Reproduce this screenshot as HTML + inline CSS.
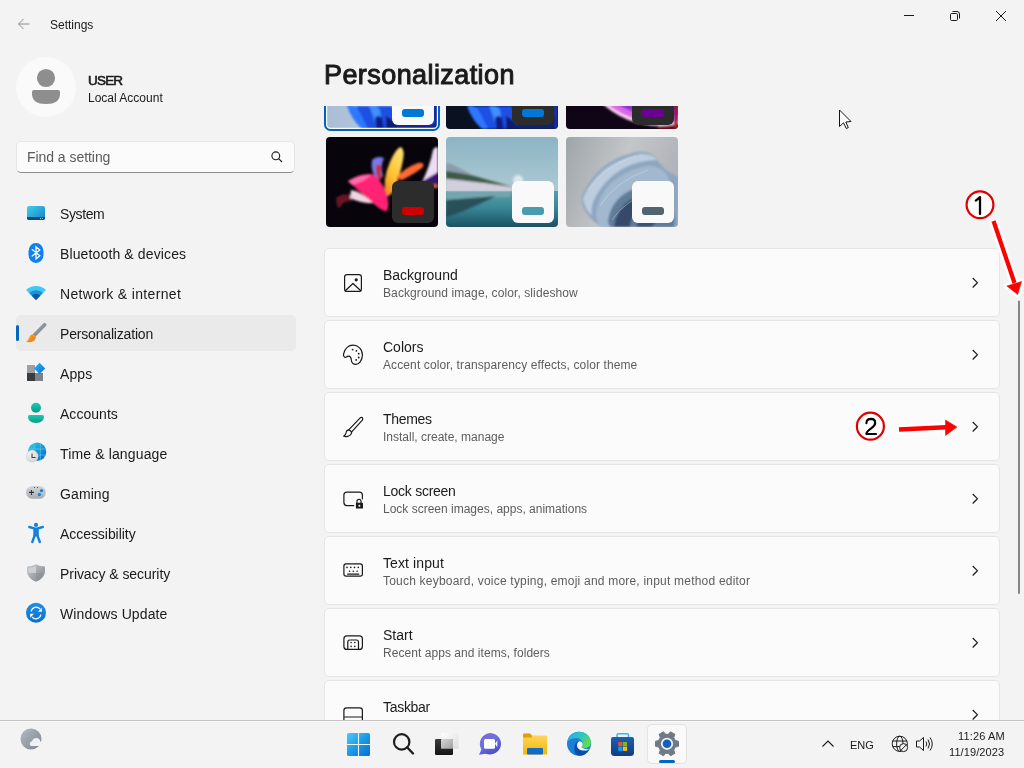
<!DOCTYPE html>
<html><head><meta charset="utf-8"><style>
html,body{margin:0;padding:0;width:1024px;height:768px;overflow:hidden;background:#f3f3f3;font-family:"Liberation Sans",sans-serif;}
.t{position:absolute;white-space:nowrap;will-change:transform;}
.card{position:absolute;left:324px;width:674px;height:67px;background:#fbfbfb;border:1px solid #e5e5e5;border-radius:5px;}
#content{position:absolute;left:0;top:106px;width:1024px;height:614px;overflow:hidden;}
#content .inner{position:absolute;left:0;top:-106px;width:1024px;height:900px;}
.sel{position:absolute;left:16px;top:315px;width:280px;height:36px;background:#eaeaea;border-radius:5px;}
.search{position:absolute;left:16px;top:141px;width:277px;height:30px;background:#fbfbfb;border:1px solid #e5e5e5;border-bottom:1px solid #8a8a8a;border-radius:5px;}
.taskbar{position:absolute;left:0;top:720px;width:1024px;height:48px;background:#f3f3f3;border-top:1px solid #c4c4c4;box-shadow:inset 0 1px 0 #f8f8f8;box-sizing:border-box;}
</style></head><body>
<div class="sel"></div>
<div style="position:absolute;left:16px;top:325px;width:3px;height:16px;background:#0067c0;border-radius:2px;"></div>
<div class="search"></div>
<div style="position:absolute;left:16px;top:57px;width:60px;height:60px;border-radius:50%;background:#fafafa;"></div>
<div class="t" style="left:50px;top:18.84px;font-size:12px;line-height:12px;color:#1a1a1a;font-weight:400;">Settings</div>
<div class="t" style="left:88px;top:73.57px;font-size:13.5px;line-height:13.5px;color:#1a1a1a;font-weight:400;letter-spacing:-0.8px;-webkit-text-stroke:0.6px #1a1a1a;">USER</div>
<div class="t" style="left:88px;top:92.34px;font-size:12px;line-height:12px;color:#1a1a1a;font-weight:400;">Local Account</div>
<div class="t" style="left:26.6px;top:149.75px;font-size:14px;line-height:14px;color:#5b5b5b;font-weight:400;letter-spacing:-0.05px;">Find a setting</div>
<div class="t" style="left:60px;top:207.35px;font-size:14px;line-height:14px;color:#1a1a1a;font-weight:400;letter-spacing:-0.38px;">System</div>
<div class="t" style="left:60px;top:247.35px;font-size:14px;line-height:14px;color:#1a1a1a;font-weight:400;letter-spacing:0.13px;">Bluetooth &amp; devices</div>
<div class="t" style="left:60px;top:287.35px;font-size:14px;line-height:14px;color:#1a1a1a;font-weight:400;letter-spacing:0.33px;">Network &amp; internet</div>
<div class="t" style="left:60px;top:327.35px;font-size:14px;line-height:14px;color:#1a1a1a;font-weight:400;letter-spacing:-0.18px;">Personalization</div>
<div class="t" style="left:60px;top:367.35px;font-size:14px;line-height:14px;color:#1a1a1a;font-weight:400;letter-spacing:0.08px;">Apps</div>
<div class="t" style="left:60px;top:407.35px;font-size:14px;line-height:14px;color:#1a1a1a;font-weight:400;letter-spacing:0.03px;">Accounts</div>
<div class="t" style="left:60px;top:447.35px;font-size:14px;line-height:14px;color:#1a1a1a;font-weight:400;letter-spacing:0.14px;">Time &amp; language</div>
<div class="t" style="left:60px;top:487.35px;font-size:14px;line-height:14px;color:#1a1a1a;font-weight:400;letter-spacing:0.1px;">Gaming</div>
<div class="t" style="left:60px;top:527.35px;font-size:14px;line-height:14px;color:#1a1a1a;font-weight:400;letter-spacing:-0.05px;">Accessibility</div>
<div class="t" style="left:60px;top:567.35px;font-size:14px;line-height:14px;color:#1a1a1a;font-weight:400;letter-spacing:-0.06px;">Privacy &amp; security</div>
<div class="t" style="left:60px;top:607.35px;font-size:14px;line-height:14px;color:#1a1a1a;font-weight:400;letter-spacing:0.12px;">Windows Update</div>
<div class="t" style="left:324px;top:62.34px;font-size:27px;line-height:27px;color:#1a1a1a;font-weight:400;letter-spacing:0.42px;-webkit-text-stroke:1.0px #1a1a1a;">Personalization</div>

<div id="content"><div class="inner">
<svg style="position:absolute;left:0;top:0" width="1024" height="240" viewBox="0 0 1024 240">
<defs>
<clipPath id="c1"><rect x="327.2" y="39" width="109.6" height="88.8" rx="3.5"/></clipPath>
<clipPath id="c2"><rect x="446" y="39" width="112" height="90" rx="4"/></clipPath>
<clipPath id="c3"><rect x="566" y="39" width="112" height="90" rx="4"/></clipPath>
<clipPath id="c4"><rect x="326" y="137" width="112" height="90" rx="4"/></clipPath>
<clipPath id="c5"><rect x="446" y="137" width="112" height="90" rx="4"/></clipPath>
<clipPath id="c6"><rect x="566" y="137" width="112" height="90" rx="4"/></clipPath>
<filter id="bl" x="-20%" y="-20%" width="140%" height="140%"><feGaussianBlur stdDeviation="0.8"/></filter>
<filter id="bl2" x="-20%" y="-20%" width="140%" height="140%"><feGaussianBlur stdDeviation="2"/></filter>
<linearGradient id="t1bg" x1="0" y1="0" x2="1" y2="0"><stop offset="0" stop-color="#a9bdd6"/><stop offset="1" stop-color="#c8d4e2"/></linearGradient>
<linearGradient id="bloomL" x1="0" y1="0" x2="1" y2="1"><stop offset="0" stop-color="#3a8cff"/><stop offset="0.6" stop-color="#0f4fe0"/><stop offset="1" stop-color="#0a2a90"/></linearGradient>
<radialGradient id="t3glow" cx="0.62" cy="-0.55" r="0.95"><stop offset="0" stop-color="#c030d0"/><stop offset="0.82" stop-color="#7a1cc8"/><stop offset="0.9" stop-color="#ffd8f0"/><stop offset="0.93" stop-color="#ff60a0"/><stop offset="1" stop-color="#200418" stop-opacity="0"/></radialGradient>
<linearGradient id="gYel" x1="0.7" y1="0" x2="0.2" y2="1"><stop offset="0" stop-color="#ffe070"/><stop offset="0.6" stop-color="#ffc030"/><stop offset="1" stop-color="#f08a20"/></linearGradient>
<linearGradient id="skyG" x1="0" y1="0" x2="0" y2="1"><stop offset="0" stop-color="#8db4c4"/><stop offset="1" stop-color="#c2d8de"/></linearGradient>
<linearGradient id="waterG" x1="0" y1="0" x2="0" y2="1"><stop offset="0" stop-color="#5a9ca6"/><stop offset="0.45" stop-color="#3a8896"/><stop offset="1" stop-color="#1a5264"/></linearGradient>
<linearGradient id="flowBg" x1="0" y1="0" x2="1" y2="0.3"><stop offset="0" stop-color="#9ea5a9"/><stop offset="0.55" stop-color="#c4c6c9"/><stop offset="1" stop-color="#b0b3b9"/></linearGradient>
<linearGradient id="flowF" x1="0" y1="0" x2="0" y2="1"><stop offset="0" stop-color="#9fb6cc"/><stop offset="1" stop-color="#5b7590"/></linearGradient>
</defs>

<!-- row1 tile1 selected -->
<rect x="325" y="37" width="114" height="93" rx="5.5" fill="#fbfbfb" stroke="#0063c4" stroke-width="2"/>
<g clip-path="url(#c1)">
<rect x="326" y="39" width="112" height="90" fill="url(#t1bg)"/>
<g filter="url(#bl)">
<path d="M347,106 Q352,104 358,108 Q366,118 372,129 L362,129 Q352,120 347,106 Z" fill="#2f78ff"/>
<path d="M356,106 L392,106 Q396,116 400,129 L368,129 Q362,116 356,106 Z" fill="#1b4fe2"/>
<path d="M369,106 Q376,104 380,110 L383,129 L376,129 Q374,116 369,106 Z" fill="#3f8fff"/>
<path d="M375,118 Q378,114 382,118 L384,129 L376,129 Z" fill="#0b1f8a"/>
<path d="M386,116 Q394,120 400,129 L386,129 Z" fill="#0a1a70"/>
<path d="M400,120 Q420,126 438,122 L438,129 L396,129 Z" fill="#12288a"/>
<path d="M430,104 L438,104 L438,129 L434,129 Z" fill="#0c2aa0"/>
</g>
<rect x="392" y="83" width="42" height="42" rx="6" fill="#f9f9f9"/>
<rect x="402" y="109" width="22" height="8" rx="3" fill="#0078d4"/>
</g>

<!-- row1 tile2 -->
<g clip-path="url(#c2)">
<rect x="446" y="39" width="112" height="90" fill="#0a1222"/>
<g filter="url(#bl)">
<path d="M467,106 Q472,104 478,108 Q486,118 492,129 L482,129 Q472,120 467,106 Z" fill="#2f78ff"/>
<path d="M476,106 L512,106 Q516,116 520,129 L488,129 Q482,116 476,106 Z" fill="#1b4fe2"/>
<path d="M489,106 Q496,104 500,110 L503,129 L496,129 Q494,116 489,106 Z" fill="#3f8fff"/>
<path d="M495,118 Q498,114 502,118 L504,129 L496,129 Z" fill="#0b1f8a"/>
<path d="M506,116 Q514,120 520,129 L506,129 Z" fill="#0a1a70"/>
<path d="M520,120 Q540,126 558,122 L558,129 L516,129 Z" fill="#102070"/>
<path d="M552,104 L558,104 L558,129 L555,129 Z" fill="#1530a0"/>
</g>
<rect x="512" y="83" width="42" height="42" rx="6" fill="#2c2c2c"/>
<rect x="522" y="109" width="22" height="8" rx="3" fill="#0078d4"/>
</g>

<!-- row1 tile3 -->
<g clip-path="url(#c3)">
<rect x="566" y="39" width="112" height="90" fill="#100516"/>
<g filter="url(#bl)">
<ellipse cx="672" cy="129" rx="14" ry="10" fill="#6a1020" opacity="0.9"/>
<circle cx="660" cy="40" r="86" fill="#ffd0ec"/>
<circle cx="661" cy="38" r="85" fill="#d868e8"/>
<circle cx="662" cy="34" r="83" fill="#8a30d8"/>
<circle cx="664" cy="28" r="82" fill="#5a18a0"/>
<rect x="674" y="104" width="4" height="25" fill="#a01828"/>
</g>
<rect x="632" y="83" width="42" height="42" rx="6" fill="#2c2c2c"/>
<rect x="642" y="109" width="22" height="8" rx="3" fill="#6a0094"/>
</g>

<!-- row2 tile1 glow -->
<g clip-path="url(#c4)">
<rect x="326" y="137" width="112" height="90" fill="#08040c"/>
<g filter="url(#bl)">
<path d="M336,198 Q341,193 350,195 L352,201 Q344,200 340,207 Q338,210 337,205 Z" fill="#6a1422"/>
<path d="M372,160 Q377,155 384,158 Q380,166 383,176 L378,181 Q370,172 372,160 Z" fill="#7a78e8"/>
<path d="M376,166 Q379,163 382,166 Q380,172 382,178 L379,180 Q375,173 376,166 Z" fill="#c03040"/>
<path d="M386,196 Q382,180 390,162 Q396,148 401,147 Q405,150 403,160 Q400,176 394,190 Q390,197 386,196 Z" fill="url(#gYel)"/>
<path d="M396,178 Q404,168 418,163 Q425,162 423,167 Q416,173 402,180 Z" fill="#ff6a30"/>
<path d="M348,181 Q360,173 372,174 Q380,178 386,192 Q390,204 387,211 Q383,212 374,204 Q360,192 348,181 Z" fill="#ff2474"/>
<path d="M348,181 Q360,174 371,175 Q364,182 352,185 Z" fill="#ff6ab0"/>
<path d="M351,190 Q362,192 373,203 Q362,204 350,198 Z" fill="#f4d4e4"/>
<path d="M422,182 Q430,166 433,150 Q436,145 438,148 L438,178 Q430,180 422,182 Z" fill="#eedcf4"/>
<path d="M414,186 Q428,178 438,172 L438,186 Z" fill="#3a1670"/>
<path d="M428,185 L438,184 L438,188 L428,188 Z" fill="#c06040"/>
</g>
<rect x="392" y="181" width="42" height="42" rx="6" fill="#2c2c2c"/>
<rect x="402" y="207" width="22" height="8" rx="3" fill="#d10000"/>
</g>

<!-- row2 tile2 lake -->
<g clip-path="url(#c5)">
<rect x="446" y="137" width="112" height="90" fill="url(#skyG)"/>
<rect x="446" y="191" width="112" height="36" fill="url(#waterG)"/>
<g filter="url(#bl)">
<circle cx="518" cy="180" r="5" fill="#ffffff" opacity="0.6"/>
<path d="M446,163.5 Q450,163 453,164.8 Q462,169 472,175 Q490,181 512,187 L446,180 Z" fill="#8c9cab"/>
<path d="M446,171 Q470,174 488,180 Q500,183 512,187 L500,187 Q475,181 446,178.5 Z" fill="#3d5a46"/>
<path d="M446,179 Q480,182 512,187 L512,191 L446,191 Z" fill="#d2cedc"/>
<path d="M446,192 L512,192 L510,197 Q480,198 446,200 Z" fill="#7aaab2" opacity="0.8"/>
<path d="M446,200 Q470,198 496,196 Q480,204 466,210 Q454,215 446,217 Z" fill="#23474f" opacity="0.85"/>
</g>
<rect x="512" y="181" width="42" height="42" rx="6" fill="#f9f9f9"/>
<rect x="522" y="207" width="22" height="8" rx="3" fill="#4a9bb0"/>
</g>

<!-- row2 tile3 flow -->
<g clip-path="url(#c6)">
<rect x="566" y="137" width="112" height="90" fill="url(#flowBg)"/>
<g filter="url(#bl)">
<path d="M581.5,197 Q587,184 595,175 Q603,166 611.5,161.5 Q622,155 634,152.7 Q644,150.5 651.5,154 Q656,157 659,162.7 Q664,168 667.7,171.5 Q673,174 678,177 L678,227 L601.5,227 Q590,220 584,209 Q581,203 581.5,197 Z" fill="#8ea6bf"/>
<path d="M583,198 Q590,182 604,170 Q620,158 640,154 Q652,153 657,160 Q640,160 624,168 Q606,178 596,196 Q590,206 592,216 Q584,208 583,198 Z" fill="#bccde0"/>
<path d="M596,214 Q598,196 610,184 Q626,170 646,166 Q660,165 666,174 Q672,182 674,196 Q662,184 644,186 Q624,190 614,206 Q608,216 610,227 L600,227 Q596,220 596,214 Z" fill="#a2b8cf"/>
<path d="M608,222 Q610,204 624,194 Q640,184 656,188 Q668,194 672,208 Q676,218 674,227 L610,227 Z" fill="#5f7b98"/>
<path d="M614,227 Q616,210 630,200 Q644,194 656,200 Q646,202 638,210 Q630,218 630,227 Z" fill="#34496a"/>
<path d="M636,227 Q640,214 652,208 Q664,206 670,214 Q662,216 656,222 Q652,226 652,227 Z" fill="#3a5070"/>
</g>
<g stroke="#dfe8f1" stroke-width="0.7" fill="none" opacity="0.55">
<path d="M588,190 Q604,166 636,156"/>
<path d="M600,206 Q614,182 648,170"/>
<path d="M612,220 Q626,198 656,192"/>
</g>
<rect x="632" y="181" width="42" height="42" rx="6" fill="#f9f9f9"/>
<rect x="642" y="207" width="22" height="8" rx="3" fill="#52646f"/>
</g>
</svg>

<div class="card" style="top:248px"></div>
<div class="t" style="left:383px;top:267.85px;font-size:14px;line-height:14px;color:#1a1a1a;font-weight:400;">Background</div>
<div class="t" style="left:383px;top:287.34px;font-size:12px;line-height:12px;color:#5d5d5d;font-weight:400;letter-spacing:0.1px;">Background image, color, slideshow</div>
<div class="card" style="top:320px"></div>
<div class="t" style="left:383px;top:339.85px;font-size:14px;line-height:14px;color:#1a1a1a;font-weight:400;">Colors</div>
<div class="t" style="left:383px;top:359.34px;font-size:12px;line-height:12px;color:#5d5d5d;font-weight:400;letter-spacing:0.11px;">Accent color, transparency effects, color theme</div>
<div class="card" style="top:392px"></div>
<div class="t" style="left:383px;top:411.85px;font-size:14px;line-height:14px;color:#1a1a1a;font-weight:400;letter-spacing:-0.3px;">Themes</div>
<div class="t" style="left:383px;top:431.34px;font-size:12px;line-height:12px;color:#5d5d5d;font-weight:400;">Install, create, manage</div>
<div class="card" style="top:464px"></div>
<div class="t" style="left:383px;top:483.85px;font-size:14px;line-height:14px;color:#1a1a1a;font-weight:400;letter-spacing:-0.26px;">Lock screen</div>
<div class="t" style="left:383px;top:503.34px;font-size:12px;line-height:12px;color:#5d5d5d;font-weight:400;">Lock screen images, apps, animations</div>
<div class="card" style="top:536px"></div>
<div class="t" style="left:383px;top:555.85px;font-size:14px;line-height:14px;color:#1a1a1a;font-weight:400;letter-spacing:0.1px;">Text input</div>
<div class="t" style="left:383px;top:575.34px;font-size:12px;line-height:12px;color:#5d5d5d;font-weight:400;letter-spacing:0.21px;">Touch keyboard, voice typing, emoji and more, input method editor</div>
<div class="card" style="top:608px"></div>
<div class="t" style="left:383px;top:627.85px;font-size:14px;line-height:14px;color:#1a1a1a;font-weight:400;">Start</div>
<div class="t" style="left:383px;top:647.34px;font-size:12px;line-height:12px;color:#5d5d5d;font-weight:400;letter-spacing:0.05px;">Recent apps and items, folders</div>
<div class="card" style="top:680px"></div>
<div class="t" style="left:383px;top:699.85px;font-size:14px;line-height:14px;color:#1a1a1a;font-weight:400;letter-spacing:-0.3px;">Taskbar</div>
<div class="t" style="left:383px;top:719.34px;font-size:12px;line-height:12px;color:#5d5d5d;font-weight:400;">Taskbar behaviors, system pins</div>

</div></div>
<div class="taskbar"></div>
<div style="position:absolute;left:647px;top:724px;width:40px;height:40px;background:#f9f9f9;border-radius:5px;border:1px solid #e3e3e3;box-sizing:border-box;"></div>
<div style="position:absolute;left:659px;top:760px;width:16px;height:3px;background:#0067c0;border-radius:2px;"></div>
<div class="t" style="left:849.7px;top:739.69px;font-size:11px;line-height:11px;color:#1a1a1a;font-weight:400;">ENG</div>
<div class="t" style="right:19.5px;text-align:right;top:730.69px;font-size:11px;line-height:11px;color:#1a1a1a;font-weight:400;letter-spacing:0.15px;">11:26 AM</div>
<div class="t" style="right:19.5px;text-align:right;top:747.49px;font-size:11px;line-height:11px;color:#1a1a1a;font-weight:400;letter-spacing:0.1px;">11/19/2023</div>

<svg style="position:absolute;left:0;top:0;pointer-events:none" width="1024" height="768" viewBox="0 0 1024 768">
<defs>
<linearGradient id="gSys" x1="0" y1="0" x2="1" y2="1"><stop offset="0" stop-color="#3fd0ea"/><stop offset="1" stop-color="#1a7fc8"/></linearGradient>
<linearGradient id="gBrush" x1="0" y1="0" x2="1" y2="1"><stop offset="0" stop-color="#ffc21a"/><stop offset="1" stop-color="#f06010"/></linearGradient>
<linearGradient id="gHandle" gradientUnits="userSpaceOnUse" x1="34" y1="324" x2="46" y2="336"><stop offset="0" stop-color="#aab0b6"/><stop offset="1" stop-color="#6e747a"/></linearGradient>
<linearGradient id="gDia" x1="0" y1="0" x2="1" y2="1"><stop offset="0" stop-color="#2bb6f5"/><stop offset="1" stop-color="#0a6ed6"/></linearGradient>
<linearGradient id="gAcc" x1="0" y1="0" x2="0" y2="1"><stop offset="0" stop-color="#1ccab2"/><stop offset="1" stop-color="#0d9a88"/></linearGradient>
<linearGradient id="gGlobe" x1="0" y1="0" x2="1" y2="1"><stop offset="0" stop-color="#33d0e8"/><stop offset="1" stop-color="#0a5cc6"/></linearGradient>
<radialGradient id="gClock" cx="0.4" cy="0.35" r="0.7"><stop offset="0" stop-color="#f6f6f6"/><stop offset="1" stop-color="#cfcfcf"/></radialGradient>
<linearGradient id="gPad" x1="0" y1="0" x2="0" y2="1"><stop offset="0" stop-color="#d3d6da"/><stop offset="1" stop-color="#a9adb2"/></linearGradient>
<linearGradient id="gShield" x1="0" y1="0" x2="1" y2="1"><stop offset="0" stop-color="#c9ccd0"/><stop offset="1" stop-color="#7f8388"/></linearGradient>
<linearGradient id="gUpd" x1="0" y1="0" x2="0" y2="1"><stop offset="0" stop-color="#1e90e6"/><stop offset="1" stop-color="#0b6fd0"/></linearGradient>
<linearGradient id="gStart" x1="0" y1="0" x2="1" y2="1"><stop offset="0" stop-color="#4ccaf8"/><stop offset="0.5" stop-color="#1a9ae8"/><stop offset="1" stop-color="#0a6cd6"/></linearGradient>
<linearGradient id="gChat" x1="0" y1="0" x2="0.6" y2="1"><stop offset="0" stop-color="#8266d0"/><stop offset="0.5" stop-color="#6a72de"/><stop offset="1" stop-color="#4a4ec8"/></linearGradient>
<linearGradient id="gTvBack" x1="0" y1="0" x2="1" y2="1"><stop offset="0" stop-color="#ffffff"/><stop offset="1" stop-color="#dcdcdc"/></linearGradient>
<linearGradient id="gTvFront" x1="0" y1="0" x2="0" y2="1"><stop offset="0" stop-color="#3c3c3c"/><stop offset="1" stop-color="#141414"/></linearGradient>
<linearGradient id="gTvMid" x1="0" y1="0" x2="1" y2="1"><stop offset="0" stop-color="#d8d8d8"/><stop offset="1" stop-color="#9e9e9e"/></linearGradient>
<linearGradient id="gFold" x1="0" y1="0" x2="0" y2="1"><stop offset="0" stop-color="#ffd766"/><stop offset="1" stop-color="#f2b800"/></linearGradient>
<linearGradient id="gEdge" x1="0" y1="0" x2="1" y2="1"><stop offset="0" stop-color="#3bd98a"/><stop offset="0.5" stop-color="#1a9de0"/><stop offset="1" stop-color="#0c5fc0"/></linearGradient>
<linearGradient id="gStore" x1="0" y1="0" x2="0" y2="1"><stop offset="0" stop-color="#1e5fb0"/><stop offset="1" stop-color="#0f3d80"/></linearGradient>
<linearGradient id="gEdge2" x1="0" y1="0" x2="1" y2="0.6"><stop offset="0" stop-color="#2aa6ea"/><stop offset="0.5" stop-color="#2cc4c8"/><stop offset="1" stop-color="#62dc50"/></linearGradient>
<linearGradient id="gMoon" x1="0" y1="0" x2="1" y2="1"><stop offset="0" stop-color="#b4bac2"/><stop offset="1" stop-color="#7e858e"/></linearGradient>
</defs>

<!-- title bar -->
<g stroke="#8e8e8e" stroke-width="1" fill="none">
<path d="M18.5,24 L29.5,24 M23.5,19 L18.5,24 L23.5,29"/>
</g>
<g stroke="#1a1a1a" stroke-width="1" fill="none">
<path d="M904,15.5 L914,15.5"/>
<rect x="950.5" y="13.5" width="7" height="7" rx="1.2"/>
<path d="M952.5,11.5 L957,11.5 Q959.5,11.5 959.5,14 L959.5,18.5"/>
<path d="M996,11 L1006,21 M1006,11 L996,21"/>
</g>

<!-- avatar -->
<circle cx="46" cy="78" r="9.1" fill="#8e8e8e"/>
<path d="M32,92 Q32,90 34,90 L58,90 Q60,90 60,92 L60,94 Q60,104 46,104 Q32,104 32,94 Z" fill="#8e8e8e"/>

<!-- search icon -->
<g stroke="#1a1a1a" stroke-width="1.1" fill="none">
<circle cx="275.8" cy="155.8" r="3.9"/>
<path d="M278.6,158.6 L282,162"/>
</g>

<!-- nav icons -->
<rect x="27" y="206" width="18" height="14" rx="2" fill="url(#gSys)"/>
<path d="M27,217 L45,217 L45,218 Q45,220 43,220 L29,220 Q27,220 27,218 Z" fill="#0d4f7a"/>
<circle cx="40.5" cy="218.5" r="0.55" fill="#bfe6f5"/><circle cx="42.3" cy="218.5" r="0.55" fill="#bfe6f5"/>

<rect x="28.5" y="243" width="15" height="20" rx="7.3" ry="8.5" fill="#0b82ef"/>
<path d="M32.2,249.6 L39.8,255.7 L36,258.9 L36,246.8 L39.8,249.9 L32.2,256" stroke="#fff" stroke-width="1.25" fill="none" stroke-linejoin="miter" stroke-linecap="round"/>

<path d="M36,300 L26.1,290.1 A14,14 0 0 1 45.9,290.1 Z" fill="#3ccaf2"/>
<path d="M36,300 L29.1,293.1 A9.8,9.8 0 0 1 42.9,293.1 Z" fill="#1a8fe0"/>
<path d="M36,300 L31.6,295.6 A6.25,6.25 0 0 1 40.4,295.6 Z" fill="#0c5aa6"/>

<path d="M34,335.5 L44.6,324.8" stroke="url(#gHandle)" stroke-width="3.7" stroke-linecap="round"/>
<path d="M31.5,334.5 Q34.5,334 35.8,337 Q35.5,341 31,342 Q28,342.5 26.2,341.8 Q28.5,340.5 29,338 Q29.5,335 31.5,334.5 Z" fill="url(#gBrush)"/>

<rect x="27" y="365" width="8" height="8" fill="#9c9fa4"/>
<rect x="27" y="373" width="8" height="8" fill="#3a3c3f"/>
<rect x="35" y="373" width="8" height="8" fill="#7e8186"/>
<path d="M39.6,362.8 L45.2,368.4 L39.6,374 L34,368.4 Z" fill="url(#gDia)"/>

<circle cx="36" cy="407.8" r="5" fill="url(#gAcc)"/>
<path d="M28,416.5 Q28,415 29.5,415 L42.5,415 Q44,415 44,416.5 Q44,423 36,423 Q28,423 28,416.5 Z" fill="url(#gAcc)"/>

<circle cx="37.1" cy="451.8" r="9.2" fill="url(#gGlobe)"/>
<g stroke="#5fdcf0" stroke-width="0.7" fill="none" opacity="0.8">
<path d="M28.5,449 L45.7,449 M28.5,455 L45.7,455"/>
<path d="M34,443 L34,461 M40.3,443 L40.3,461"/>
</g>
<circle cx="32.1" cy="456.3" r="6.2" fill="url(#gClock)"/>
<path d="M32,453.5 L32,457.5 L35.5,457.5" stroke="#3a3a3a" stroke-width="1.1" fill="none"/>

<rect x="26" y="486" width="19.8" height="12.8" rx="6.4" fill="url(#gPad)"/>
<path d="M29,492.4 L34,492.4 M31.5,490 L31.5,495" stroke="#333" stroke-width="1.1"/>
<circle cx="41.5" cy="490.6" r="1.6" fill="#0c7fe0"/>
<circle cx="39.4" cy="494.6" r="1.6" fill="#0c7fe0"/>
<circle cx="34.4" cy="487.5" r="0.55" fill="#333"/><circle cx="37.5" cy="487.5" r="0.55" fill="#333"/>

<circle cx="36" cy="524.9" r="2.1" fill="#1282dc"/>
<path d="M29.3,527 L36,528.8 L42.8,527" stroke="#1282dc" stroke-width="2.4" stroke-linecap="round" fill="none"/>
<path d="M33.3,528.5 L38.8,528.5 L38.8,536.5 L33.3,536.5 Z" fill="#1282dc"/>
<path d="M34.5,536 L32.3,542 M37.6,536 L39.8,542" stroke="#1282dc" stroke-width="2.4" stroke-linecap="round" fill="none"/>

<path d="M36,564.3 Q40,566.5 45,566.5 L45,571 Q45,578.5 36,581.8 Q27,578.5 27,571 L27,566.5 Q32,566.5 36,564.3 Z" fill="url(#gShield)"/>
<path d="M36,566 L36,580 Q43.5,577 43.5,571 L43.5,573 L36,573 Z" fill="#8d9196" opacity="0.6"/>
<path d="M36,566 Q32.5,568 28.5,568 L28.5,573 L36,573 Z" fill="#d8dbde" opacity="0.7"/>

<circle cx="36" cy="612.8" r="10" fill="url(#gUpd)"/>
<g stroke="#fff" stroke-width="1.2" fill="none">
<path d="M31.2,611.5 A5,5 0 0 1 40,609"/>
<path d="M40.8,614.5 A5,5 0 0 1 32,617"/>
</g>
<path d="M41.8,607.8 L41.8,611.8 L38,611.8 Z" fill="#fff"/>
<path d="M30.2,617.8 L30.2,613.8 L34,613.8 Z" fill="#fff"/>

<!-- taskbar icons -->
<rect x="347" y="733" width="23" height="23" rx="1.6" fill="url(#gStart)"/>
<path d="M358.5,733 L358.5,756 M347,744.5 L370,744.5" stroke="#f3f3f3" stroke-width="1.1"/>
<g stroke="#1f1f1f" stroke-width="2.2" fill="none">
<circle cx="401.7" cy="741.9" r="7.7"/>
<path d="M407.3,747.5 L413,753.5" stroke-linecap="round" stroke-width="2.4"/>
</g>
<rect x="441" y="733" width="17.5" height="15.7" rx="1.2" fill="url(#gTvBack)"/>
<rect x="435" y="739" width="18" height="16" rx="1.2" fill="url(#gTvFront)"/>
<rect x="441" y="739" width="12" height="9.7" rx="0.8" fill="url(#gTvMid)"/>
<path d="M490.5,733 A11.3,10.8 0 1 1 485.5,753.8 L479,754.8 L481.5,749.5 A11.3,10.8 0 0 1 490.5,733 Z" fill="url(#gChat)"/>
<rect x="484" y="739" width="11" height="9.7" rx="1.5" fill="#fff"/>
<path d="M495,743.8 L497.3,740.5 L497.3,747.3 Z" fill="#fff"/>
<path d="M523,735 Q523,733.5 524.5,733.5 L530,733.5 L532,735.5 L546,735.5 Q547,735.5 547,737 L547,754.5 L523,754.5 Z" fill="url(#gFold)"/>
<path d="M523,735 Q523,733.5 524.5,733.5 L530,733.5 L532,735.5 L532,737.5 L523,737.5 Z" fill="#e0a000"/>
<rect x="527" y="748" width="16" height="6.5" rx="1" fill="#0f6cc8"/>
<circle cx="579" cy="743.8" r="12" fill="#1a7fd8"/>
<path d="M567.3,741.5 Q569.5,732 579,731.8 Q588.5,732 590.8,740.5 Q591.5,746.5 587,747.8 Q583.5,748.6 581.3,746.8 Q583.2,744.5 582.5,741.8 Q580.5,737.8 575.5,738 Q570,738.5 567.3,741.5 Z" fill="url(#gEdge2)"/>
<path d="M574.3,748 Q574.5,741.5 579.2,741.2 Q576.8,744 578.2,747 Q580.8,750.5 586.8,750.2 Q588.6,749.8 589.3,749.4 Q586,755.6 579.2,755.8 Q574,755.3 574.3,748 Z" fill="#0d4fa6"/>
<path d="M579.2,741.2 Q582.6,741.3 582.6,744.2 Q582.3,746.2 581.3,746.9 Q583.6,749.2 589.3,749.4 Q585.5,751.2 581.2,750.3 Q577,749 576.9,745.3 Q577,742 579.2,741.2 Z" fill="#f4f6f6"/>
<path d="M617,738 L617,735.3 Q617,733.8 618.5,733.8 L627,733.8 Q628.5,733.8 628.5,735.3 L628.5,738" stroke="#3ab8f2" stroke-width="1.6" fill="none"/>
<path d="M611,739 Q611,737 613,737 L632,737 Q634,737 634,739 L634,752.5 Q634,756 630.5,756 L614.5,756 Q611,756 611,752.5 Z" fill="url(#gStore)"/>
<rect x="618.2" y="742" width="4.2" height="4.2" fill="#f25022"/><rect x="622.9" y="742" width="4.2" height="4.2" fill="#7fba00"/>
<rect x="618.2" y="746.7" width="4.2" height="4.2" fill="#00a4ef"/><rect x="622.9" y="746.7" width="4.2" height="4.2" fill="#ffb900"/>
<g transform="translate(667,743.8) rotate(90)">
<path d="M-2.5,-11.5 L2.5,-11.5 L3.3,-8.3 L6.3,-6.7 L9.5,-7.9 L12,-3.5 L9.5,-1.3 L9.5,1.3 L12,3.5 L9.5,7.9 L6.3,6.7 L3.3,8.3 L2.5,11.5 L-2.5,11.5 L-3.3,8.3 L-6.3,6.7 L-9.5,7.9 L-12,3.5 L-9.5,1.3 L-9.5,-1.3 L-12,-3.5 L-9.5,-7.9 L-6.3,-6.7 L-3.3,-8.3 Z" fill="#707a84" stroke="#707a84" stroke-width="1" stroke-linejoin="round"/>
<circle r="6.1" fill="#eef0f2"/>
<circle r="4.3" fill="#1260bc"/>
</g>

<!-- weather -->
<circle cx="31" cy="739" r="10.5" fill="url(#gMoon)"/>
<path d="M31.5,746 Q29.5,746 29.8,743.5 Q30,741.5 32,741.3 Q33,738 36.5,738 Q39.8,738.3 40.3,741.5 Q42.8,741.8 42.8,743.8 Q42.7,746 40.5,746 Z" fill="#eef1f5"/>

<!-- tray -->
<path d="M822.5,746.5 L828,741 L833.5,746.5" stroke="#1a1a1a" stroke-width="1.1" fill="none"/>
<g stroke="#1a1a1a" stroke-width="1" fill="none">
<circle cx="899.8" cy="743.8" r="7.6"/>
<ellipse cx="899.8" cy="743.8" rx="3.2" ry="7.6"/>
<path d="M892.5,741 L907,741 M892.5,746.6 L900,746.6"/>
<circle cx="903.6" cy="747.6" r="4" fill="#f3f3f3"/>
<path d="M901,750.2 L906.2,745"/>
</g>
<g stroke="#1a1a1a" stroke-width="1" fill="none">
<path d="M916.5,741 L919.5,741 L923.5,737.5 L923.5,750.5 L919.5,747 L916.5,747 Z"/>
<path d="M926,741.5 Q927.5,744 926,746.5 M928,739.5 Q931,744 928,748.5 M930,737.5 Q934.5,744 930,750.5"/>
</g>

<!-- card icons -->
<g stroke="#1a1a1a" stroke-width="1.2" fill="none" stroke-linejoin="round" stroke-linecap="round">
<rect x="344.6" y="274.6" width="16.8" height="16.8" rx="2.5"/>
<circle cx="356.2" cy="279.8" r="1" fill="#1a1a1a"/>
<path d="M345.2,290.8 L353,283.5 L360.8,290.8"/>

<path d="M350.3,357 C349.5,355.5 347.5,356 346.5,357 C344.5,358 343,356 343.6,354 C344.5,348 349,345.2 353,345.2 C358,345.2 362.4,349 362.4,355 C362.4,360 359,364.4 356,364.4 C353,364.4 351.5,362 351.3,360 C351.2,358.5 350.8,357.5 350.3,357 Z"/>

<path d="M348.7,429.8 L360.2,417.8 C361,417 362.5,417.2 362.7,418.5 C362.8,419.2 362.6,419.8 362.3,420.2 L351.5,432.2"/>
<path d="M348.7,429.8 C347.5,429.8 346.5,430.8 346.3,432 C346,434 345,435.5 343.7,436.3 C346,437 349.5,436.5 350.8,434.5 C351.5,433.5 351.8,432.5 351.5,432.2 C351,430.8 350,430 348.7,429.8 Z"/>

<path d="M353.8,505.6 L346.9,505.6 Q343.9,505.6 343.9,502.6 L343.9,495.1 Q343.9,492.1 346.9,492.1 L359.4,492.1 Q362.4,492.1 362.4,495.1 L362.4,498.8"/>
<path d="M357,502.8 L357,501.2 Q357,499.3 359,499.3 Q361,499.3 361,501.2 L361,502.8"/>

<rect x="343.9" y="563.9" width="18.5" height="12.3" rx="2.2"/>
<path d="M347.6,574.1 L358.8,574.1"/>

<rect x="343.9" y="635.9" width="18.5" height="13.5" rx="3"/>
<path d="M347.8,649.4 L347.8,642 Q347.8,640 349.8,640 L356.5,640 Q358.5,640 358.5,642 L358.5,649.4"/>
</g>
<g fill="#1a1a1a">
<circle cx="352.6" cy="349.6" r="0.9"/><circle cx="356.4" cy="350.8" r="0.9"/><circle cx="358.7" cy="353.7" r="0.9"/><circle cx="358.7" cy="357.5" r="0.9"/><circle cx="356.2" cy="359.9" r="0.9"/>
<rect x="355.9" y="502.8" width="7.1" height="5.8" rx="0.6"/>
<circle cx="347" cy="567.4" r="0.8"/><circle cx="350.8" cy="567.4" r="0.8"/><circle cx="354.5" cy="567.4" r="0.8"/><circle cx="358.3" cy="567.4" r="0.8"/>
<circle cx="349.6" cy="571.2" r="0.8"/><circle cx="353.3" cy="571.2" r="0.8"/><circle cx="357.1" cy="571.2" r="0.8"/>
<circle cx="351.1" cy="642.6" r="0.8"/><circle cx="354.8" cy="642.6" r="0.8"/><circle cx="351.1" cy="646.4" r="0.8"/><circle cx="354.8" cy="646.4" r="0.8"/>
</g>
<circle cx="359.4" cy="505.8" r="1" fill="#fbfbfb"/>
<g stroke="#1a1a1a" stroke-width="1.2" fill="none">
<path d="M343.9,720 L343.9,710.5 Q343.9,707.9 346.5,707.9 L359.8,707.9 Q362.4,707.9 362.4,710.5 L362.4,720 M343.9,717 L362.4,717"/>
</g>

<!-- chevrons -->
<g stroke="#1a1a1a" stroke-width="1.2" fill="none">
<path d="M972.7,278 L977.4,282.7 L972.7,287.5"/>
<path d="M972.7,350 L977.4,354.7 L972.7,359.5"/>
<path d="M972.7,422 L977.4,426.7 L972.7,431.5"/>
<path d="M972.7,494 L977.4,498.7 L972.7,503.5"/>
<path d="M972.7,566 L977.4,570.7 L972.7,575.5"/>
<path d="M972.7,638 L977.4,642.7 L972.7,647.5"/>
<path d="M972.7,710 L977.4,714.7 L972.7,719.5"/>
</g>

<!-- scrollbar -->
<rect x="1018" y="300.5" width="2" height="293.5" rx="1" fill="#868686"/>

<!-- cursor -->
<path d="M839.5,110 L839.5,126.5 L843.5,122.8 L846.3,128.5 L848.3,127.6 L845.8,122 L851,121.5 Z" fill="#fff" stroke="#111" stroke-width="1" stroke-linejoin="round"/>

<!-- annotations -->
<circle cx="980" cy="204.7" r="13.4" fill="#fff" stroke="#dd0000" stroke-width="2.2"/>
<path d="M980,214 L980,197.2 L975.8,200.6" stroke="#000" stroke-width="2.3" fill="none" stroke-linejoin="round" stroke-linecap="round"/>
<circle cx="870.4" cy="426.2" r="13.5" fill="#fff" stroke="#dd0000" stroke-width="2.2"/>
<path d="M866.4,423.2 Q866.6,418.9 870.9,418.9 Q875.2,419 875.2,422.8 Q875.2,425.6 871.5,428.2 Q866.6,431.6 866.3,434 L876,434" stroke="#000" stroke-width="2.1" fill="none" stroke-linejoin="round" stroke-linecap="round"/>
<g stroke="#fff" fill="#fff" stroke-linejoin="round">
<path d="M993.5,221 L1014.5,283" stroke-width="9"/>
<path d="M1006.8,286 L1017.7,294.6 L1021.6,281.4 Z" stroke-width="6"/>
<path d="M899,429.5 L946,427.3" stroke-width="9"/>
<path d="M945.5,420 L957,427 L945.5,435.5 Z" stroke-width="6"/>
</g>
<g stroke="#ff0000" fill="#ff0000" stroke-linejoin="round">
<path d="M993.5,221 L1014.5,283" stroke-width="4.2"/>
<path d="M1006.8,286 L1017.7,294.6 L1021.6,281.4 Z" stroke-width="0.5"/>
<path d="M899,429.5 L946,427.3" stroke-width="4.5"/>
<path d="M945.5,420 L957,427 L945.5,435.5 Z" stroke-width="0.5"/>
</g>
</svg>

</body></html>
